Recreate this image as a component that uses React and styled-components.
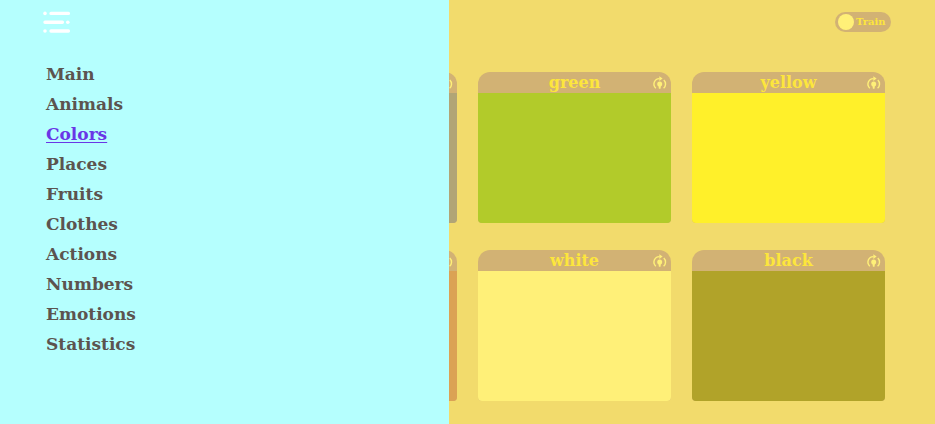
import { useState } from "react";
import styled, { createGlobalStyle } from "styled-components";

const Colors = {
  Page: "#f2db6c",
  Menu: "#b5fffe",
  Bar: "#d2b274",
  Title: "#fde63c",
  Light: "#fff078",
  Link: "#5c544f",
  Active: "#6a36e6",
  White: "#ffffff",
};

const slab = `"DejaVu Serif", serif`;

const GlobalStyle = createGlobalStyle`
  * {
    box-sizing: border-box;
  }

  body {
    margin: 0;
    background-color: ${Colors.Page};
    font-family: ${slab};
  }
`;

const Header = styled.header`
  display: flex;
  justify-content: flex-end;
  padding: 12px 44px 0 0;
`;

const Switch = styled.label`
  display: flex;
  align-items: center;
  gap: 2px;
  width: 56px;
  height: 20px;
  padding: 0 3px;
  border-radius: 10px;
  background-color: ${Colors.Bar};
  color: ${Colors.Title};
  font-size: 10px;
  line-height: 20px;
  font-weight: 700;
  cursor: pointer;
`;

const SwitchInput = styled.input`
  appearance: none;
  flex: none;
  width: 16px;
  height: 16px;
  margin: 0;
  border-radius: 50%;
  background-color: ${Colors.Light};
  cursor: pointer;
`;

const Cards = styled.main`
  display: grid;
  grid-template-columns: repeat(4, 1fr);
  gap: 27px 21px;
  padding: 40px 50px 23px;
`;

const CardEl = styled.article`
  overflow: hidden;
  border-radius: 12px 12px 4px 4px;
  background-color: ${Colors.Bar};
`;

const CardBar = styled.div`
  display: grid;
  grid-template-columns: 16px 1fr 16px;
  align-items: center;
  height: 21px;
  padding: 0 3px;
`;

const CardTitle = styled.h2`
  grid-column: 2;
  margin: 0;
  color: ${Colors.Title};
  font-size: 16px;
  line-height: 20px;
  font-weight: 700;
  text-align: center;
`;

const FlipButton = styled.button`
  display: flex;
  width: 16px;
  height: 16px;
  padding: 0;
  border: 0;
  background: none;
  color: ${Colors.Light};
  cursor: pointer;
`;

const Swatch = styled.div`
  height: 130px;
  background-color: ${(p) => p.$color};
`;

const Menu = styled.aside`
  position: fixed;
  top: 0;
  bottom: 0;
  left: 0;
  width: 48%;
  padding: 10px 42px;
  background-color: ${Colors.Menu};
`;

const MenuButton = styled.button`
  display: flex;
  width: 29px;
  height: 24px;
  padding: 0;
  border: 0;
  background: none;
  color: ${Colors.White};
  cursor: pointer;
`;

const MenuList = styled.ul`
  margin: 25px 0 0;
  padding: 0 4px;
  list-style: none;
`;

const MenuItem = styled.li`
  height: 30px;
  font-size: 17px;
  line-height: 30px;
  font-weight: 700;
`;

const MenuLink = styled.a`
  color: ${(p) => (p.$active ? Colors.Active : Colors.Link)};
  text-decoration: ${(p) => (p.$active ? "underline" : "none")};
  text-decoration-thickness: 1px;
  text-underline-offset: 2px;
`;

const links = [
  "Main",
  "Animals",
  "Colors",
  "Places",
  "Fruits",
  "Clothes",
  "Actions",
  "Numbers",
  "Emotions",
  "Statistics",
];

const cards = [
  { name: "red", color: "#e8502c" },
  { name: "grey", color: "#b1a576" },
  { name: "green", color: "#b2cb2a" },
  { name: "yellow", color: "#fff02a" },
  { name: "blue", color: "#6f8fa0" },
  { name: "orange", color: "#dba254" },
  { name: "white", color: "#fff078" },
  { name: "black", color: "#b1a329" },
];

function FlipIcon() {
  return (
    <svg width="16" height="16" viewBox="0 0 16 16" fill="none" aria-hidden="true">
      <path
        d="M3.8 13.2A5.5 5.5 0 0 1 7.5 3.6M11.6 13.2a5.5 5.5 0 0 0 .2-8.2"
        stroke="currentColor"
        strokeWidth="1.4"
      />
      <path d="M7.3 1.2 10.6 3.6 7.3 6z" fill="currentColor" />
      <circle cx="7.7" cy="8.9" r="2.5" fill="currentColor" />
      <path d="M6.5 11h2.4l-.4 2.8H6.9z" fill="currentColor" />
    </svg>
  );
}

function MenuIcon() {
  return (
    <svg width="29" height="24" viewBox="0 0 29 24" fill="none" aria-hidden="true">
      <g stroke="currentColor" strokeWidth="3.4" strokeLinecap="round">
        <path d="M9 3.4h17.4M3 12.2h17.4M9 21h17.4" />
      </g>
      <g fill="currentColor">
        <circle cx="3" cy="3.4" r="1.8" />
        <circle cx="25.8" cy="12.2" r="1.8" />
        <circle cx="3" cy="21" r="1.8" />
      </g>
    </svg>
  );
}

function Card({ card }) {
  const { name, color } = card;

  return (
    <CardEl>
      <CardBar>
        <CardTitle>{name}</CardTitle>
        <FlipButton type="button" aria-label={`Flip ${name}`}>
          <FlipIcon />
        </FlipButton>
      </CardBar>
      <Swatch $color={color} />
    </CardEl>
  );
}

export default function App() {
  const [active, setActive] = useState("Colors");

  return (
    <>
      <GlobalStyle />
      <Header>
        <Switch htmlFor="mode">
          <SwitchInput id="mode" type="checkbox" role="switch" />
          Train
        </Switch>
      </Header>
      <Cards>
        {cards.map((card) => (
          <Card key={card.name} card={card} />
        ))}
      </Cards>
      <Menu>
        <MenuButton type="button" aria-label="Close menu">
          <MenuIcon />
        </MenuButton>
        <nav>
          <MenuList>
            {links.map((link) => (
              <MenuItem key={link}>
                <MenuLink
                  href={`#${link.toLowerCase()}`}
                  $active={link === active}
                  onClick={() => setActive(link)}
                >
                  {link}
                </MenuLink>
              </MenuItem>
            ))}
          </MenuList>
        </nav>
      </Menu>
    </>
  );
}
